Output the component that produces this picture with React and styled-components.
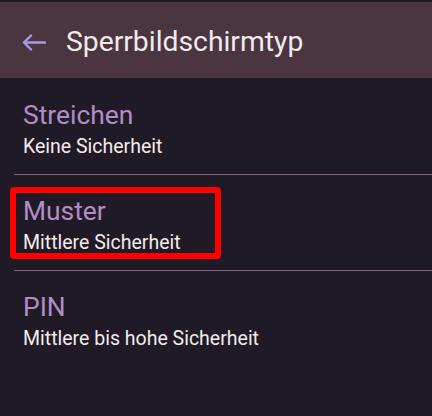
import React from "react";
import styled, { createGlobalStyle } from "styled-components";

const GlobalStyle = createGlobalStyle`
  html, body {
    margin: 0;
    padding: 0;
    background: #201a26;
  }
  body {
    font-family: Roboto, "Noto Sans", "Liberation Sans", sans-serif;
    -webkit-font-smoothing: antialiased;
  }
`;

const Screen = styled.div`
  width: 432px;
  height: 416px;
  overflow: hidden;
  background: #201a26;
  padding-top: 2px;
  box-sizing: border-box;
`;

const Toolbar = styled.header`
  height: 76px;
  background: #4a3541;
  display: flex;
  align-items: center;
  padding: 2px 0 0 22px;
  box-sizing: border-box;
  gap: 19px;
`;

const BackButton = styled.button`
  background: none;
  border: 0;
  padding: 0;
  display: flex;
  margin-top: 2px;
  cursor: pointer;
`;

const Title = styled.h1`
  margin: 0;
  font-size: 28.3px;
  font-weight: 400;
  color: #f3eaea;
`;

const List = styled.ul`
  list-style: none;
  margin: 0;
  padding: 1px 0 0;
`;

const Item = styled.li`
  position: relative;
  padding: 21px 0 14px 23px;
`;

const ItemTitle = styled.div`
  font-size: 26.4px;
  line-height: 30px;
  color: #b18ec7;
`;

const ItemSub = styled.div`
  margin-top: 4px;
  font-size: 19.5px;
  line-height: 26px;
  color: #f4ebea;
`;

const Divider = styled.li`
  height: 1px;
  margin-left: 14px;
  background: #7d6384;
`;

const Highlight = styled.span`
  position: absolute;
  left: 10px;
  top: 12px;
  width: 211px;
  height: 72px;
  border: 6px solid #ff0000;
  border-radius: 4px;
  box-sizing: border-box;
  pointer-events: none;
`;

const BackArrow = () => (
  <svg width="25" height="17" viewBox="0 0 25 17" fill="none">
    <path
      d="M2 8.5H23M9 1.5L2 8.5L9 15.5"
      stroke="#a99be0"
      strokeWidth="2.4"
      strokeLinecap="round"
      strokeLinejoin="round"
    />
  </svg>
);

const options = [
  { title: "Streichen", sub: "Keine Sicherheit" },
  { title: "Muster", sub: "Mittlere Sicherheit", marked: true },
  { title: "PIN", sub: "Mittlere bis hohe Sicherheit" },
];

export default function App() {
  return (
    <Screen>
      <GlobalStyle />
      <Toolbar>
        <BackButton aria-label="Zurück">
          <BackArrow />
        </BackButton>
        <Title>Sperrbildschirmtyp</Title>
      </Toolbar>
      <List>
        {options.map((o, i) => (
          <React.Fragment key={o.title}>
            <Item>
              <ItemTitle>{o.title}</ItemTitle>
              <ItemSub>{o.sub}</ItemSub>
              {o.marked && <Highlight />}
            </Item>
            {i < options.length - 1 && <Divider />}
          </React.Fragment>
        ))}
      </List>
    </Screen>
  );
}
